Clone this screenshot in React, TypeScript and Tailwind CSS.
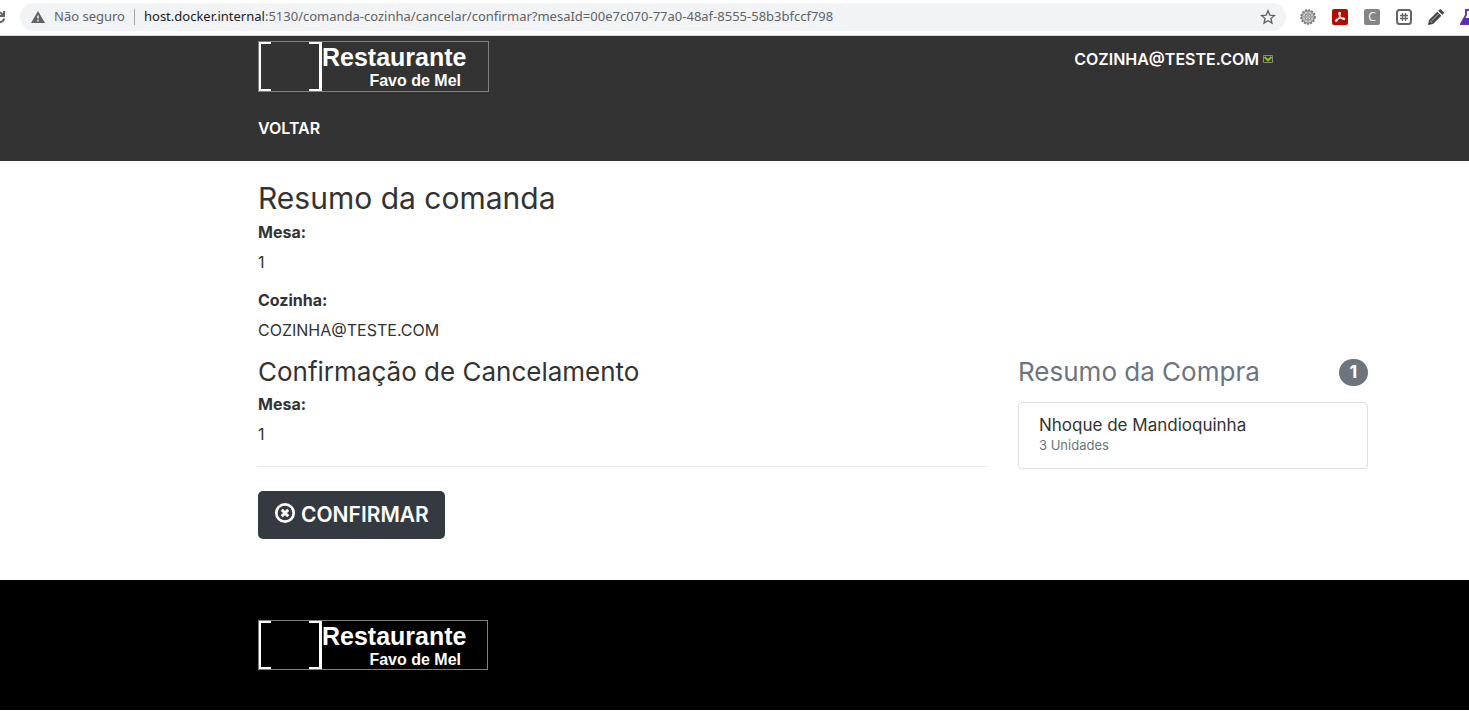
import React from 'react';

function Logo({ small = false }: { small?: boolean }) {
  return (
    <a
      href="#inicio"
      aria-label="Restaurante Favo de Mel"
      className={`flex border border-[#808080] text-white ${small ? 'h-[50px] w-[230px]' : 'h-[51px] w-[231px]'}`}
    >
      <svg viewBox="0 0 63 49" className="h-full w-[63px] shrink-0" preserveAspectRatio="none" fill="none" stroke="#fff" aria-hidden="true">
        <path d="M12 1H1v47h11" strokeWidth="2" />
        <path d="M50 1h11.5v47H50" strokeWidth="2" />
        <path d="M61.5 0v49" strokeWidth="3" />
      </svg>
      <span className="flex w-[142px] flex-col font-['Liberation_Sans',sans-serif] font-bold">
        <span className="text-[25px] leading-[30px]">Restaurante</span>
        <span className="pr-[3px] text-right text-base leading-[18px]">Favo de Mel</span>
      </span>
    </a>
  );
}

function Extensions() {
  return (
    <div className="flex shrink-0 items-center gap-4">
      <svg viewBox="0 0 16 16" className="size-4" aria-hidden="true">
        <circle cx="8" cy="8" r="6.8" fill="none" stroke="#777" strokeWidth="2" strokeDasharray="2 1.2" />
        <circle cx="8" cy="8" r="6.2" fill="#c4c4c4" stroke="#777" />
        <path d="M8 2v12M2 8h12M3.8 3.8l8.4 8.4M12.2 3.8l-8.4 8.4" stroke="#999" strokeWidth=".7" />
        <circle cx="8" cy="8" r="3" fill="#dedede" stroke="#777" strokeWidth=".8" />
        <circle cx="8" cy="8" r="1.3" fill="#fff" stroke="#666" strokeWidth=".8" />
      </svg>
      <svg viewBox="0 0 16 16" className="size-4" aria-hidden="true">
        <rect width="16" height="16" rx="2" fill="#b30b00" />
        <path d="M7.2 3.5c1.8-.8 1 3-.2 5.3-1 2-2.8 4.2-3.4 3.2-.6-1.2 3-2.8 5.8-3 2.5-.2 3.9.6 3 1.3-1.1.8-3.6-1.2-4.6-3-.8-1.5-1.2-3.2-.6-3.8Z" fill="none" stroke="#fff" strokeWidth="1.2" />
      </svg>
      <span className="flex size-4 items-center justify-center rounded-xs bg-[#858585] font-['Open_Sans',sans-serif] text-xs leading-4 text-white">C</span>
      <svg viewBox="0 0 16 16" className="size-4" fill="none" stroke="#666" aria-hidden="true">
        <rect x="1" y="1" width="14" height="14" rx="2.5" strokeWidth="2" />
        <path d="M6.5 4v8M9.5 4v8M4 6.5h8M4 9.5h8" strokeWidth="1.3" />
      </svg>
      <svg viewBox="0 0 16 16" className="size-4" fill="#454545" aria-hidden="true">
        <path d="M0 16l1-5 8.3-8.3 4 4L5 15ZM10.2 1.8l1.4-1.4q.7-.7 1.4 0l2.6 2.6q.7.7 0 1.4l-1.4 1.4Z" />
        <path d="M2.2 11.8l2 2M4 11.5l6.5-6.5" stroke="#eee" strokeWidth=".8" />
      </svg>
      <svg viewBox="0 0 9 16" className="h-4 w-[9px]" aria-hidden="true">
        <path d="M5 1h4M6 1v5L1 15h8" fill="none" stroke="#673ab7" strokeWidth="2" />
        <path d="M4 9h5v6H1Z" fill="#5b2da8" />
      </svg>
    </div>
  );
}

function BrowserBar() {
  return (
    <div className="flex h-9 items-center overflow-hidden border-b border-[#d5d7da] bg-white pb-px font-['Noto_Sans',sans-serif] text-[13px] text-[#5f6368]">
      <svg viewBox="0 0 5 16" className="mr-[15px] h-4 w-[5px] shrink-0" fill="none" stroke="#5f6368" strokeWidth="2" aria-hidden="true">
        <path d="M4 2v5H0M-2 13.5Q3 13.5 4.2 9.5M0 3.2l3 3" />
      </svg>
      <div className="flex h-7 min-w-0 grow items-center rounded-full bg-[#f1f3f4] pl-[11px] pr-[10px]">
        <svg viewBox="0 0 14 12" className="h-3 w-[14px] shrink-0" aria-hidden="true">
          <path d="M7 0l7 12H0Z" fill="#5f6368" />
          <path d="M7 4.5v3M7 8.8v1.6" stroke="#f1f3f4" strokeWidth="1.5" />
        </svg>
        <span className="ml-[9px] whitespace-nowrap">Não seguro</span>
        <span className="mx-[9px] h-4 w-px shrink-0 bg-[#a4a7aa]" />
        <span className="grow truncate">
          <span className="text-[#202124]">host.docker.internal</span>:5130/comanda-cozinha/cancelar/confirmar?mesaId=00e7c070-77a0-48af-8555-58b3bfccf798
        </span>
        <svg viewBox="0 0 16 16" className="size-4 shrink-0" fill="none" stroke="#5f6368" strokeWidth="1.3" aria-hidden="true">
          <path d="M8 1.8l1.8 4.3 4.7.4-3.6 3 1.1 4.6L8 11.7l-4 2.4 1.1-4.6-3.6-3 4.7-.4Z" />
        </svg>
      </div>
      <div className="ml-[14px]">
        <Extensions />
      </div>
    </div>
  );
}

function Field({ label, value }: { label: string; value: string }) {
  return (
    <div className="leading-6">
      <dt className="font-bold">{label}</dt>
      <dd className="mt-[6px]">{value}</dd>
    </div>
  );
}

export default function App() {
  return (
    <div className="bg-white font-['Inter',sans-serif] text-base text-[#333]">
      <BrowserBar />
      <header className="bg-[#333] pl-[258px] pr-[101px] pt-[5px] pb-[21px] font-semibold text-white">
        <div className="flex items-start justify-between">
          <Logo />
          <a href="#conta" className="mr-[95px] mt-[6px] flex items-center gap-1 leading-6">
            COZINHA@TESTE.COM
            <svg viewBox="0 0 10 8" className="h-2 w-[10px]" fill="none" aria-hidden="true">
              <path d="M.5.5h9v7h-9Z" stroke="#888" />
              <path d="M1.5 2l3.5 3.3L8.5 2" stroke="#7bd000" strokeWidth="2" />
            </svg>
          </a>
        </div>
        <nav className="mt-6 leading-6">
          <a href="#voltar">VOLTAR</a>
        </nav>
      </header>

      <main className="pl-[258px] pr-[101px] pt-5 pb-[41px]">
        <h2 className="text-[30px] leading-[34px]">Resumo da comanda</h2>
        <dl className="mt-[5px] flex flex-col gap-[14px]">
          <Field label="Mesa:" value="1" />
          <Field label="Cozinha:" value="COZINHA@TESTE.COM" />
        </dl>
        <div className="mt-4 flex items-start gap-[30px]">
          <section className="min-w-0 grow">
            <h4 className="text-[26px] leading-7">Confirmação de Cancelamento</h4>
            <dl className="mt-[6px]">
              <Field label="Mesa:" value="1" />
            </dl>
            <hr className="mt-5 mb-6 border-[#ebebeb]" />
            <button type="button" className="flex h-12 items-center gap-[5px] rounded-[5px] bg-[#343a40] px-4 text-[21px] font-semibold leading-6 text-white">
              <svg viewBox="0 0 22 22" className="mb-1 size-[22px]" fill="none" stroke="#fff" aria-hidden="true">
                <circle cx="11" cy="11" r="8.7" strokeWidth="2.7" />
                <path d="M7.8 7.8l6.4 6.4M14.2 7.8l-6.4 6.4" strokeWidth="3" />
              </svg>
              CONFIRMAR
            </button>
          </section>
          <aside className="w-[350px] shrink-0">
            <h4 className="flex items-center justify-between text-[26px] leading-7 text-[#6c757d]">
              Resumo da Compra
              <span className="flex h-[27px] w-[29px] items-center justify-center rounded-full bg-[#6c757d] text-lg font-bold text-white">1</span>
            </h4>
            <ul className="mt-4 rounded-[4px] border border-[#dfdfdf]">
              <li className="px-5 pt-3 pb-[13px]">
                <h6 className="text-[17px] leading-5">Nhoque de Mandioquinha</h6>
                <p className="text-[13px] leading-5 text-[#6c757d]">3 Unidades</p>
              </li>
            </ul>
          </aside>
        </div>
      </main>

      <footer className="bg-black pl-[258px] pr-[101px] py-10">
        <Logo small />
      </footer>
    </div>
  );
}
